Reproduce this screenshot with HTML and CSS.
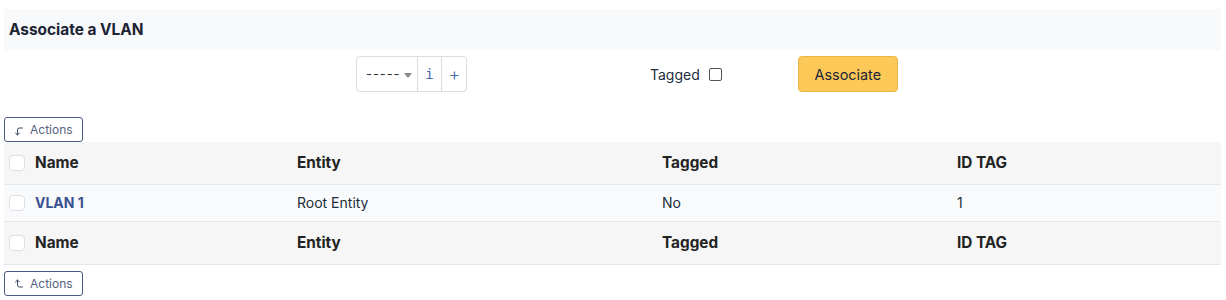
FILE: index.html
```html
<!DOCTYPE html>
<html>
<head>
<meta charset="utf-8">
<link rel="stylesheet" href="styles.css">
</head>
<body>
<div class="page">
  <div class="card-head">Associate a VLAN</div>
  <form class="assoc-row">
    <div class="select-group">
      <div class="select"><span class="dashes">-----</span><span class="caret"></span></div>
      <div class="addon info">i</div>
      <div class="addon plus">+</div>
    </div>
    <label class="tagged">Tagged <span class="cb"></span></label>
    <button type="button" class="btn-assoc">Associate</button>
  </form>

  <button type="button" class="btn-actions top">
    <svg width="12" height="12" viewBox="0 0 24 24" fill="none" stroke="currentColor" stroke-width="2" stroke-linecap="round" stroke-linejoin="round"><path d="M19 6h-6a4 4 0 0 0 -4 4v10"/><path d="M13 16l-4 4l-4 -4"/></svg>
    Actions
  </button>

  <table class="grid">
    <colgroup>
      <col class="c0"><col class="c1"><col class="c2"><col class="c3"><col class="c4">
    </colgroup>
    <thead>
      <tr><th><span class="cb"></span></th><th>Name</th><th>Entity</th><th>Tagged</th><th>ID TAG</th></tr>
    </thead>
    <tbody>
      <tr><td><span class="cb"></span></td><td><a class="link">VLAN 1</a></td><td>Root Entity</td><td>No</td><td>1</td></tr>
    </tbody>
    <tfoot>
      <tr><th><span class="cb"></span></th><th>Name</th><th>Entity</th><th>Tagged</th><th>ID TAG</th></tr>
    </tfoot>
  </table>

  <button type="button" class="btn-actions bottom">
    <svg width="12" height="12" viewBox="0 0 24 24" fill="none" stroke="currentColor" stroke-width="2" stroke-linecap="round" stroke-linejoin="round"><path d="M19 18h-6a4 4 0 0 1 -4 -4v-10"/><path d="M13 8l-4 -4l-4 4"/></svg>
    Actions
  </button>
</div>
</body>
</html>
```

FILE: styles.css
```css
* { box-sizing: border-box; }
html, body { margin: 0; padding: 0; background: #ffffff; }
body {
  font-family: Inter, "Noto Sans", "Liberation Sans", sans-serif;
  font-size: 14px;
  color: #232e3c;
}
.page { padding: 9px 5px 0 4px; }

.card-head {
  height: 41px;
  background: #f8f9fb;
  font-weight: 700;
  font-size: 15.4px;
  padding-left: 5px;
  display: flex;
  align-items: center;
  color: #1c2433;
}

.assoc-row {
  display: flex;
  align-items: center;
  height: 36px;
  margin-top: 6px;
  padding-left: 352px;
}
.select-group {
  display: flex;
  height: 36px;
  width: 111px;
  border: 1px solid #dadde2;
  border-radius: 4px;
}
.select {
  width: 61px;
  display: flex;
  align-items: center;
  padding-left: 9px;
  border-right: 1px solid #dadde2;
  color: #333;
  font-size: 13px;
}
.dashes { letter-spacing: 0.9px; }
.caret {
  margin-left: 4px;
  width: 0; height: 0;
  border-left: 4px solid transparent;
  border-right: 4px solid transparent;
  border-top: 5px solid #888;
  margin-top: 2px;
}
.addon {
  display: flex;
  align-items: center;
  justify-content: center;
  color: #4566a8;
}
.info {
  width: 24px;
  border-right: 1px solid #dadde2;
  font-family: "DejaVu Sans Mono", monospace;
  font-size: 14px;
}
.plus { flex: 1; font-size: 18px; font-weight: 300; padding-left: 1px; }

.tagged {
  margin-left: 183px;
  display: flex;
  align-items: center;
  font-size: 14px;
  color: #232e3c;
}
.tagged .cb { margin-left: 9px; width: 13px; height: 13px; border: 1px solid #555; border-radius: 2px; }

.btn-assoc {
  margin-left: 76px;
  width: 100px;
  height: 36px;
  background: #fcc857;
  border: 1px solid #e9b746;
  border-radius: 4px;
  font-family: inherit;
  font-size: 14.4px;
  color: #1d2636;
  padding: 0;
}

.btn-actions {
  display: flex;
  align-items: center;
  gap: 5px;
  height: 25px;
  width: 79px;
  padding: 0 0 0 8px;
  background: #fff;
  border: 1px solid #4a5a82;
  border-radius: 3px;
  font-family: inherit;
  font-size: 12px;
  color: #55627f;
}
.btn-actions.top { margin-top: 25px; }
.btn-actions.bottom { margin-top: 6px; }
.btn-actions svg { color: #3a4660; margin-top: 2px; }

.grid {
  width: 1217px;
  border-collapse: collapse;
  table-layout: fixed;
  margin-top: 0;
}
.c0 { width: 26px; }
.c1 { width: 262px; }
.c2 { width: 365px; }
.c3 { width: 295px; }
.c4 { width: 269px; }
.grid th, .grid td {
  text-align: left;
  padding: 0 0 0 5px;
  vertical-align: middle;
}
.grid thead tr, .grid tfoot tr {
  background: #f6f6f6;
  height: 42px;
}
.grid tfoot tr { height: 43px; }
.grid thead th, .grid tfoot th {
  font-weight: 700;
  font-size: 15.3px;
  color: #232323;
}
.grid thead tr { border-bottom: 1px solid #e6e7ea; }
.grid tbody tr { background: #f9fafb; height: 37px; border-bottom: 1px solid #e6e7ea; }
.grid tfoot tr { border-bottom: 1px solid #e6e7ea; }
.grid td { font-size: 14px; color: #232e3c; }
.grid .cb {
  display: block;
  width: 16px; height: 16px;
  border: 1px solid #dcdfe4;
  border-radius: 4px;
  background: #fff;
}
.link { color: #3a5290; font-weight: 700; font-size: 14px; }
```
